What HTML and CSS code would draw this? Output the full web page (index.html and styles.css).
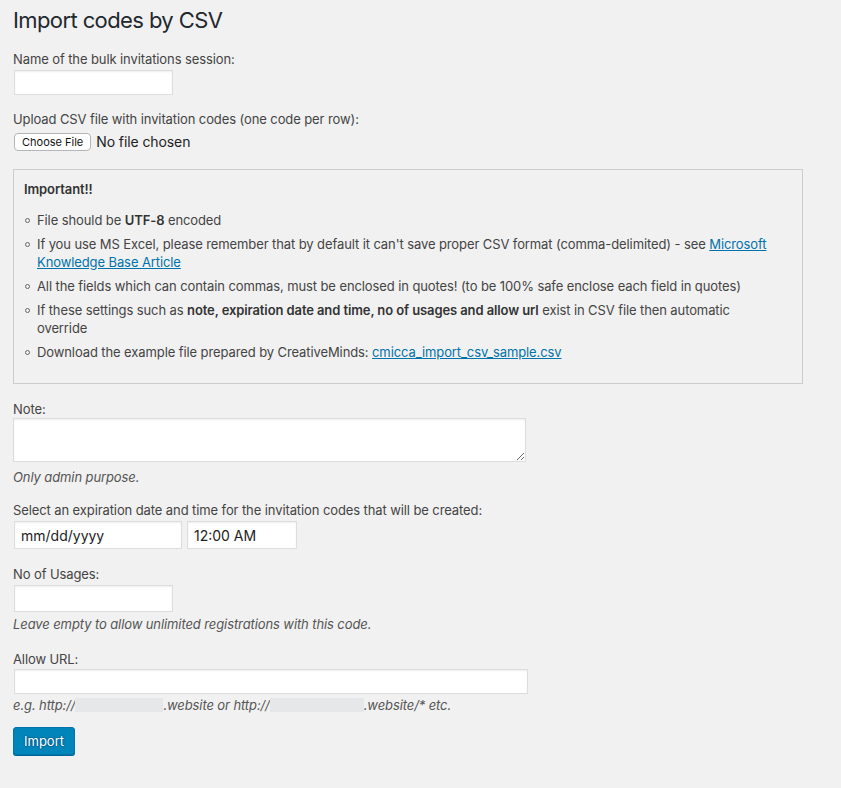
FILE: index.html
```html
<!DOCTYPE html>
<html lang="en">
<head>
<meta charset="utf-8">
<title>Import codes by CSV</title>
<link rel="stylesheet" href="styles.css">
</head>
<body>
<div class="wrap">
  <h1 class="title">Import codes by CSV</h1>

  <label class="label l-name">Name of the bulk invitations session:</label>
  <input class="input input-short i-name" type="text">

  <label class="label l-upload">Upload CSV file with invitation codes (one code per row):</label>
  <div class="file-row">
    <span class="file-btn">Choose File</span>
    <span class="file-text">No file chosen</span>
  </div>

  <div class="notice">
    <p class="notice-title">Important!!</p>
    <ul class="notice-list">
      <li>File should be <b>UTF-8</b> encoded</li>
      <li>If you use MS Excel, please remember that by default it can't save proper CSV format (comma-delimited) - see <a href="#">Microsoft Knowledge Base Article</a></li>
      <li>All the fields which can contain commas, must be enclosed in quotes! (to be 100% safe enclose each field in quotes)</li>
      <li>If these settings such as <b>note, expiration date and time, no of usages and allow url</b> exist in CSV file then automatic override</li>
      <li>Download the example file prepared by CreativeMinds: <a href="#">cmicca_import_csv_sample.csv</a></li>
    </ul>
  </div>

  <label class="label l-note">Note:</label>
  <textarea class="textarea"></textarea>
  <p class="desc d-note">Only admin purpose.</p>

  <label class="label l-date">Select an expiration date and time for the invitation codes that will be created:</label>
  <div class="date-row">
    <input class="input date" type="text" value="mm/dd/yyyy">
    <input class="input time" type="text" value="12:00 AM">
  </div>

  <label class="label l-usage">No of Usages:</label>
  <input class="input input-short i-usage" type="text">
  <p class="desc d-usage">Leave empty to allow unlimited registrations with this code.</p>

  <label class="label l-url">Allow URL:</label>
  <input class="input input-long" type="text">
  <p class="desc d-url">e.g. http://<span class="redact r1"></span>.website or http://<span class="redact r2"></span>.website/* etc.</p>

  <button class="btn-primary" type="button">Import</button>
</div>
</body>
</html>
```

FILE: styles.css
```css
html, body {
  margin: 0;
  padding: 0;
  background: #f1f1f1;
}

body {
  font-family: Inter, "Liberation Sans", Arial, sans-serif;
  font-size: 13px;
  line-height: 18px;
  letter-spacing: -0.1px;
  color: #444;
}

.wrap {
  padding-left: 13px;
  padding-bottom: 20px;
}

.title {
  margin: 6px 0 0;
  font-size: 22px;
  line-height: 29px;
  font-weight: 400;
  letter-spacing: -0.6px;
  color: #23282d;
}

.label {
  display: block;
  height: 18px;
}

.l-name { margin-top: 15px; }
.l-upload { margin-top: 15px; }
.l-note { margin-top: 16px; }
.l-date { margin-top: 15px; }
.l-usage { margin-top: 16px; }
.l-url { margin-top: 17px; }

.input {
  display: block;
  box-sizing: border-box;
  margin: 0;
  border: 1px solid #ddd;
  background: #fff;
  box-shadow: inset 0 1px 2px rgba(0, 0, 0, 0.07);
  font-family: inherit;
  color: #32373c;
  outline: none;
}

.input-short {
  width: 159px;
  margin-left: 1px;
}

.i-name {
  height: 25px;
  margin-top: 2px;
}

.i-usage {
  height: 27px;
  margin-top: 2px;
}

.input-long {
  width: 514px;
  height: 25px;
  margin-left: 1px;
  margin-top: 1px;
}

.file-row {
  margin-top: 4px;
  height: 20px;
  display: flex;
  align-items: center;
  gap: 5px;
  padding-left: 1px;
}

.file-btn {
  box-sizing: border-box;
  height: 18px;
  padding: 0 7px;
  display: flex;
  align-items: center;
  border: 1px solid #b5b5b5;
  border-radius: 4px;
  background: #fff;
  font-size: 11px;
  letter-spacing: 0;
  color: #111;
}

.file-text {
  font-size: 14px;
  color: #222;
}

.notice {
  margin-top: 17px;
  width: 790px;
  box-sizing: border-box;
  border: 1px solid #ccc;
  padding: 10px 10px 22px;
}

.notice-title {
  margin: 0;
  font-weight: 600;
  color: #333;
}

.notice-list {
  list-style: none;
  margin: 13px 0 0;
  padding: 0 14px 0 13px;
}

.notice-list li {
  position: relative;
  margin-bottom: 6px;
}

.notice-list li:last-child {
  margin-bottom: 0;
}

.notice-list li::before {
  content: "";
  position: absolute;
  left: -12px;
  top: 7px;
  width: 3px;
  height: 3px;
  border: 1px solid #666;
  border-radius: 50%;
}

.notice-list b {
  font-weight: 600;
  color: #333;
}

.notice-list a,
.desc a {
  color: #0073aa;
  text-decoration: underline;
}

.textarea {
  display: block;
  box-sizing: border-box;
  width: 513px;
  height: 44px;
  margin: 0;
  border: 1px solid #ddd;
  background: #fff;
  box-shadow: inset 0 1px 2px rgba(0, 0, 0, 0.07);
  font-family: inherit;
}

.desc {
  margin: 0;
  font-style: italic;
  color: #555;
}

.d-note { margin-top: 6px; }
.d-usage { margin-top: 3px; }
.d-url { margin-top: 2px; }

.redact {
  display: inline-block;
  height: 14px;
  vertical-align: -2px;
  background: #e6e7e9;
}

.r1 { width: 88px; }
.r2 { width: 94px; }

.date-row {
  display: flex;
  gap: 5px;
  margin-top: 2px;
  padding-left: 1px;
}

.date-row .input {
  height: 28px;
  padding: 0 6px;
  font-size: 14px;
  color: #222;
}

.date {
  width: 168px;
}

.time {
  width: 110px;
}

.btn-primary {
  display: block;
  margin-top: 13px;
  box-sizing: border-box;
  height: 28px;
  width: 62px;
  padding: 0 10px;
  border: 1px solid #0073aa;
  border-radius: 3px;
  background: #0085ba;
  box-shadow: 0 1px 0 #006799;
  color: #fff;
  font-family: inherit;
  font-size: 13px;
  text-shadow: 0 -1px 1px #006799, 1px 0 1px #006799, 0 1px 1px #006799, -1px 0 1px #006799;
}
```
